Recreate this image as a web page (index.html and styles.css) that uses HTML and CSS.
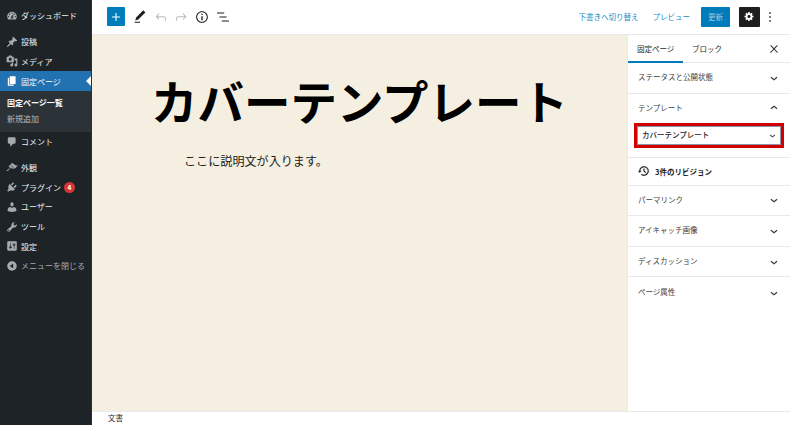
FILE: index.html
```html
<!DOCTYPE html>
<html lang="ja">
<head>
    <meta charset="UTF-8">
    <title>固定ページを編集</title>
    <link rel="stylesheet" href="styles.css">
</head>
<body>
    <svg class="defs" width="0" height="0">
        <symbol id="chev-down" viewBox="0 0 24 24"><path d="M17.5 11.6L12 16l-5.5-4.4.9-1.2L12 14l4.5-3.6 1 1.2z"/></symbol>
        <symbol id="chev-up" viewBox="0 0 24 24"><path d="M6.5 12.4L12 8l5.5 4.4-.9 1.2L12 10l-4.5 3.6-1-1.2z"/></symbol>
    </svg>

    <aside class="adminmenu">
        <ul class="menu menu-top">
            <li class="item"><svg viewBox="0 0 20 20"><path d="M3.76 16h12.48c1.1-1.37 1.76-3.11 1.76-5 0-4.42-3.58-8-8-8s-8 3.58-8 8c0 1.89.66 3.63 1.76 5zM10 4c.55 0 1 .45 1 1s-.45 1-1 1-1-.45-1-1 .45-1 1-1zM6 6c.55 0 1 .45 1 1s-.45 1-1 1-1-.45-1-1 .45-1 1-1zm8 0c.55 0 1 .45 1 1s-.45 1-1 1-1-.45-1-1 .45-1 1-1zm-5.37 5.55L12 7v6c0 1.1-.9 2-2 2s-2-.9-2-2c0-.57.24-1.08.63-1.45zM4 10c.55 0 1 .45 1 1s-.45 1-1 1-1-.45-1-1 .45-1 1-1zm12 0c.55 0 1 .45 1 1s-.45 1-1 1-1-.45-1-1 .45-1 1-1zm-5 3c0-.55-.45-1-1-1s-1 .45-1 1 .45 1 1 1 1-.45 1-1z"/></svg>ダッシュボード</li>
        </ul>
        <ul class="menu menu-group">
            <li class="item"><svg viewBox="0 0 20 20"><path d="M10.44 3.02l1.82-1.82 6.36 6.35-1.83 1.82c-1.05-.68-2.48-.57-3.41.36l-.75.75c-.92.93-1.04 2.35-.35 3.41l-1.83 1.82-2.41-2.41-2.8 2.79c-.42.42-3.38 2.71-3.8 2.29s1.86-3.39 2.28-3.81l2.79-2.79L4.1 9.36l1.83-1.82c1.05.69 2.48.57 3.4-.36l.75-.75c.93-.92 1.05-2.35.36-3.41z"/></svg>投稿</li>
            <li class="item"><svg viewBox="0 0 20 20"><path d="M13 11V4c0-.55-.45-1-1-1h-1.67L9 1H5L3.67 3H2c-.55 0-1 .45-1 1v7c0 .55.45 1 1 1h10c.55 0 1-.45 1-1zM7 4.5c1.38 0 2.5 1.12 2.5 2.5S8.38 9.5 7 9.5 4.5 8.38 4.5 7 5.62 4.5 7 4.5zM14 6h5v10.5c0 1.38-1.12 2.5-2.5 2.5S14 17.88 14 16.5s1.12-2.5 2.5-2.5c.17 0 .34.02.5.05V9h-3V6zm-4 8.05V13h2v3.5c0 1.38-1.12 2.5-2.5 2.5S7 17.88 7 16.5 8.12 14 9.5 14c.17 0 .34.02.5.05z"/></svg>メディア</li>
            <li class="item item-current"><svg viewBox="0 0 20 20"><path d="M6 15V2h10v13H6zm-1 1h8v2H3V5h2v11z"/></svg>固定ページ</li>
        </ul>
        <ul class="submenu">
            <li class="sub-current">固定ページ一覧</li>
            <li>新規追加</li>
        </ul>
        <ul class="menu menu-comment">
            <li class="item"><svg viewBox="0 0 20 20"><path d="M5 2h9c1.1 0 2 .9 2 2v7c0 1.1-.9 2-2 2h-2l-5 5v-5H5c-1.1 0-2-.9-2-2V4c0-1.1.9-2 2-2z"/></svg>コメント</li>
        </ul>
        <ul class="menu menu-group">
            <li class="item"><svg viewBox="0 0 20 20"><path d="M14.48 11.06L7.41 3.99l1.5-1.5c.5-.56 2.3-.47 3.51.32 1.21.8 1.43 1.28 2.91 2.1 1.18.64 2.45 1.26 4.45.85zm-.71.71L6.7 4.7 4.93 6.47c-.39.39-.39 1.02 0 1.41l1.06 1.06c.39.39.39 1.03 0 1.42-.6.6-1.43 1.11-2.21 1.69-.35.26-.7.53-1.01.84C1.43 13.23.4 14.84 1.19 15.12c.79.28 2.37-.75 3.71-2.09.31-.31.58-.66.84-1.01.58-.78 1.09-1.61 1.69-2.21.39-.39 1.03-.39 1.42 0l1.06 1.06c.39.39 1.02.39 1.41 0z"/></svg>外観</li>
            <li class="item"><svg viewBox="0 0 20 20"><path d="M13.11 4.36L9.87 7.6 8 5.73l3.24-3.24c.35-.34 1.05-.2 1.56.32.52.51.66 1.21.31 1.55zm-8 1.77l.91-1.12 9.01 9.01-1.19.84c-.71.71-2.63 1.16-3.82 1.16H6.14L4.9 17.26c-.59.59-1.54.59-2.12 0-.59-.58-.59-1.53 0-2.12l1.24-1.24v-3.88c0-1.13.4-3.19 1.09-3.89zm7.26 3.97l3.24-3.24c.34-.35 1.04-.21 1.55.31.52.51.66 1.21.31 1.55l-3.24 3.25z"/></svg>プラグイン<span class="badge">4</span></li>
            <li class="item"><svg viewBox="0 0 20 20"><path d="M10 9.25c-2.27 0-2.73-3.44-2.73-3.44C7 4.02 7.82 2 9.97 2c2.16 0 2.98 2.02 2.71 3.81 0 0-.41 3.44-2.68 3.44zm0 2.57L12.72 10c2.39 0 4.52 2.33 4.52 4.53v2.49s-3.65 1.13-7.24 1.13c-3.65 0-7.24-1.13-7.24-1.13v-2.49c0-2.25 1.94-4.48 4.47-4.48z"/></svg>ユーザー</li>
            <li class="item"><svg viewBox="0 0 20 20"><path d="M16.68 9.77c-1.34 1.34-3.3 1.67-4.95.99l-5.41 6.52c-.99.99-2.59.99-3.58 0s-.99-2.59 0-3.57l6.52-5.42c-.68-1.65-.35-3.61.99-4.95 1.28-1.28 3.12-1.62 4.72-1.06l-2.89 2.89 2.82 2.82 2.86-2.87c.53 1.58.18 3.39-1.08 4.65zM3.81 16.21c.4.39 1.04.39 1.43 0 .4-.4.4-1.04 0-1.43-.39-.4-1.03-.4-1.43 0-.39.39-.39 1.03 0 1.43z"/></svg>ツール</li>
            <li class="item"><svg viewBox="0 0 20 20"><path d="M18 16V4c0-1.1-.9-2-2-2H4c-1.1 0-2 .9-2 2v12c0 1.1.9 2 2 2h12c1.1 0 2-.9 2-2zM8 11h1c.55 0 1 .45 1 1s-.45 1-1 1H8v1.5c0 .28-.22.5-.5.5s-.5-.22-.5-.5V13H6c-.55 0-1-.45-1-1s.45-1 1-1h1V5.5c0-.28.22-.5.5-.5s.5.22.5.5V11zm5-2h-1c-.55 0-1-.45-1-1s.45-1 1-1h1V5.5c0-.28.22-.5.5-.5s.5.22.5.5V7h1c.55 0 1 .45 1 1s-.45 1-1 1h-1v5.5c0 .28-.22.5-.5.5s-.5-.22-.5-.5V9z"/></svg>設定</li>
            <li class="item item-collapse"><svg viewBox="0 0 20 20"><path d="M10 2.16c4.33 0 7.84 3.51 7.84 7.84s-3.51 7.84-7.84 7.84S2.16 14.33 2.16 10 5.71 2.16 10 2.16zm2 11.72V6.12L6.18 9.97z"/></svg>メニューを閉じる</li>
        </ul>
    </aside>

    <div class="editor">
        <header class="topbar">
            <div class="tools">
                <button class="btn-add"><svg viewBox="0 0 24 24"><path d="M18 11.2h-5.2V6h-1.6v5.2H6v1.6h5.2V18h1.6v-5.2H18z"/></svg></button>
                <svg class="tool" viewBox="0 0 24 24"><path d="M20.1 5.1L16.9 2 6.2 12.7l-1.3 4.4 4.5-1.3L20.1 5.1zM4 20.8h8v-1.5H4v1.5z"/></svg>
                <svg class="tool tool-off" viewBox="0 0 24 24"><path d="M18.3 11.7c-.6-.6-1.4-.9-2.3-.9H6.7l2.9-3.3-1.1-1-4.5 5L8.5 16l1-1-2.7-2.7H16c.5 0 .9.2 1.3.5 1 1 1 3.4 1 4.5v.3h1.5v-.2c0-1.5 0-4.3-1.5-5.7z"/></svg>
                <svg class="tool tool-off" viewBox="0 0 24 24"><path d="M15.6 6.5l-1.1 1 2.9 3.3H8c-.9 0-1.7.3-2.3.9-1.4 1.5-1.4 4.2-1.4 5.6v.2h1.5v-.3c0-1.1 0-3.5 1-4.5.3-.3.7-.5 1.3-.5h9.2L14.5 15l1.1 1.1 4.6-4.6-4.6-5z"/></svg>
                <svg class="tool" viewBox="0 0 24 24"><path d="M12 3.2c-4.8 0-8.8 3.9-8.8 8.8 0 4.8 3.9 8.8 8.8 8.8 4.8 0 8.8-3.9 8.8-8.8 0-4.8-4-8.8-8.8-8.8zm0 16c-4 0-7.2-3.3-7.2-7.2C4.8 8 8 4.8 12 4.8s7.2 3.3 7.2 7.2c0 4-3.2 7.2-7.2 7.2zM11 17h2v-6h-2v6zm0-8h2V7h-2v2z"/></svg>
                <svg class="tool" viewBox="0 0 24 24"><path d="M13.8 5.2H3v1.5h10.8V5.2zm-3.6 12v1.5H21v-1.5H10.2zm7.2-6H6.6v1.5h10.8v-1.5z"/></svg>
            </div>
            <div class="actions">
                <a class="link link-draft">下書きへ切り替え</a>
                <a class="link">プレビュー</a>
                <button class="btn-update">更新</button>
                <button class="btn-settings"><svg viewBox="0 0 20 20"><path d="M18 12h-2.18c-.17.7-.44 1.35-.81 1.93l1.54 1.54-2.1 2.1-1.54-1.54c-.58.36-1.23.63-1.91.79V19H8v-2.18c-.68-.16-1.33-.43-1.91-.79l-1.54 1.54-2.12-2.12 1.54-1.54c-.36-.58-.63-1.23-.79-1.91H1V9.03h2.17c.16-.7.44-1.35.8-1.94L2.43 5.55l2.1-2.1 1.54 1.54c.58-.37 1.24-.64 1.93-.81V2h3v2.18c.68.16 1.33.43 1.91.79l1.54-1.54 2.12 2.12-1.54 1.54c.36.59.64 1.24.8 1.94H18V12zm-8.5 1.5c1.66 0 3-1.34 3-3s-1.34-3-3-3-3 1.34-3 3 1.34 3 3 3z"/></svg></button>
                <svg class="kebab" viewBox="0 0 24 24"><path d="M13 19h-2v-2h2v2zm0-6h-2v-2h2v2zm0-6h-2V5h2v2z"/></svg>
            </div>
        </header>

        <div class="workspace">
            <main class="canvas">
                <h1 class="page-title">カバーテンプレート</h1>
                <p class="page-text">ここに説明文が入ります。</p>
            </main>

            <section class="panel">
                <div class="tabs">
                    <span class="tab tab-active">固定ページ</span>
                    <span class="tab">ブロック</span>
                    <svg class="close" viewBox="0 0 24 24"><path d="M13 11.8l6.1-6.3-1-1-6.1 6.2-6.1-6.2-1 1 6.1 6.3-6.5 6.7 1 1 6.5-6.6 6.5 6.6 1-1z"/></svg>
                </div>
                <div class="row">ステータスと公開状態<svg><use href="#chev-down"/></svg></div>
                <div class="template">
                    <div class="template-head">テンプレート<svg><use href="#chev-up"/></svg></div>
                    <div class="select-mark">
                        <div class="select">カバーテンプレート<svg><use href="#chev-down"/></svg></div>
                    </div>
                </div>
                <div class="revisions">
                    <svg viewBox="0 0 24 24"><path d="M5.5 12h1.75l-2.5 3-2.5-3H4a8 8 0 113.134 6.35l.907-1.194A6.5 6.5 0 105.5 12zm9.53 1.97l-2.28-2.28V8.5a.75.75 0 00-1.5 0V12a.747.747 0 00.218.529l2.5 2.5a.75.75 0 101.06-1.061z"/></svg>
                    3件のリビジョン
                </div>
                <div class="row">パーマリンク<svg><use href="#chev-down"/></svg></div>
                <div class="row">アイキャッチ画像<svg><use href="#chev-down"/></svg></div>
                <div class="row">ディスカッション<svg><use href="#chev-down"/></svg></div>
                <div class="row row-last">ページ属性<svg><use href="#chev-down"/></svg></div>
            </section>
        </div>

        <footer class="statusbar">文書</footer>
    </div>
</body>
</html>
```

FILE: styles.css
```css
* {
    box-sizing: border-box;
}
html, body {
    height: 100%;
}
body {
    margin: 0;
    display: flex;
    overflow: hidden;
    font-family: "Noto Sans CJK JP", "Noto Sans", sans-serif;
    font-size: 8px;
    color: #1e1e1e;
    background: #fff;
}
ul {
    list-style: none;
    margin: 0;
    padding: 0;
}
button {
    border: 0;
    padding: 0;
    font-family: inherit;
}
.defs {
    position: absolute;
}

/* admin menu */
.adminmenu {
    width: 92px;
    flex: none;
    background: #1e2327;
    color: #eef0f1;
    padding-top: 6px;
    border-right: 1px solid #2b3034;
}
.item {
    position: relative;
    display: flex;
    align-items: center;
    height: 19.6px;
    padding-left: 6px;
}
.item svg {
    width: 12px;
    height: 12px;
    margin-right: 3px;
    fill: #a7aaad;
    flex: none;
}
.menu-group {
    margin-top: 6.5px;
}
.item-current {
    background: #2271b1;
    color: #fff;
}
.item-current svg {
    fill: #fff;
}
.item-current::after {
    content: "";
    position: absolute;
    right: 0;
    top: 5px;
    border: 5px solid transparent;
    border-left: 0;
    border-right-color: #fff;
}
.submenu {
    background: #2c3338;
    height: 41px;
    padding: 4px 0 0 7px;
    color: #b4b9be;
    line-height: 16px;
}
.sub-current {
    color: #fff;
    font-weight: 700;
}
.badge {
    width: 11px;
    height: 11px;
    margin-left: 3px;
    border-radius: 50%;
    background: #d63638;
    color: #fff;
    font-size: 6.5px;
    font-weight: 700;
    line-height: 11px;
    text-align: center;
}
.item-collapse {
    color: #a7aaad;
}

/* top bar */
.editor {
    flex: 1;
    min-width: 0;
    display: flex;
    flex-direction: column;
}
.topbar {
    height: 35px;
    flex: none;
    display: flex;
    align-items: center;
    justify-content: space-between;
    border-bottom: 1px solid #e9e9e9;
    padding: 0 12px 1px 15px;
}
.tools {
    display: flex;
    align-items: center;
}
.btn-add {
    width: 18px;
    height: 19px;
    margin-right: 7px;
    background: #007cba;
    border-radius: 1px;
    display: flex;
    align-items: center;
    justify-content: center;
}
.btn-add svg {
    width: 16px;
    height: 16px;
    fill: #fff;
}
.tool {
    width: 16px;
    height: 16px;
    margin-right: 4.7px;
    fill: #1e1e1e;
}
.tool-off {
    fill: #b9bcbf;
}
.actions {
    display: flex;
    align-items: center;
}
.link {
    color: #1a8ac6;
    font-size: 7.5px;
    margin-right: 11px;
}
.link-draft {
    margin-right: 14px;
}
.btn-update {
    width: 29px;
    height: 20px;
    margin-right: 9px;
    background: #007cba;
    border-radius: 1px;
    color: #9fcbe3;
    font-size: 7.5px;
}
.btn-settings {
    width: 21px;
    height: 20px;
    margin-right: 2px;
    background: #1e1e1e;
    border-radius: 1px;
    display: flex;
    align-items: center;
    justify-content: center;
}
.btn-settings svg {
    width: 10.5px;
    height: 10.5px;
    fill: #fff;
}
.kebab {
    width: 16px;
    height: 16px;
}

/* canvas */
.workspace {
    flex: 1;
    min-height: 0;
    display: flex;
}
.canvas {
    flex: 1;
    min-width: 0;
    background: #f5efe1;
    border-right: 1px solid #e9e9e9;
}
.page-title {
    margin: 30px 0 0;
    text-align: center;
    font-size: 46.5px;
    font-weight: 700;
    line-height: 70px;
    color: #000;
}
.page-text {
    margin: 17px 0 0 92px;
    font-size: 12.1px;
    line-height: 18px;
    color: #1a1a1a;
}

/* settings panel */
.panel {
    width: 162px;
    flex: none;
    background: #fff;
    font-size: 7.5px;
}
.panel svg {
    fill: #1e1e1e;
    stroke: #1e1e1e;
    stroke-width: .5;
}
.tabs {
    height: 28px;
    display: flex;
    align-items: center;
    border-bottom: 1px solid #e9e9e9;
}
.tab {
    height: 100%;
    display: flex;
    align-items: center;
    padding: 0 9px;
    white-space: nowrap;
    color: #1e1e1e;
}
.tab-active {
    width: 55px;
    border-bottom: 2px solid #007cba;
    margin-bottom: -1px;
}
.close {
    width: 12px;
    height: 12px;
    margin-left: auto;
    margin-right: 10px;
}
.row, .template-head {
    height: 30.6px;
    display: flex;
    align-items: center;
    justify-content: space-between;
    padding: 0 9px 2px 10px;
    border-bottom: 1px solid #e9e9e9;
    color: #3c4043;
}
.row svg, .template-head svg {
    width: 14px;
    height: 14px;
    margin-top: 2px;
}
.row-last {
    border-bottom: 0;
}
.template {
    height: 64px;
    border-bottom: 1px solid #e9e9e9;
}
.template-head {
    border-bottom: 0;
    height: 29px;
}
.select-mark {
    margin: 0 6px;
    height: 25px;
    border: 3px solid #d00000;
}
.select {
    height: 100%;
    display: flex;
    align-items: center;
    justify-content: space-between;
    padding: 0 2px 2px 4px;
    border: 1px solid #8d96a0;
    font-weight: 500;
    color: #1e1e1e;
}
.select svg {
    width: 11px;
    height: 11px;
    margin-top: 2px;
}
.revisions {
    height: 28px;
    display: flex;
    align-items: center;
    padding: 0 0 0 9px;
    border-bottom: 1px solid #e9e9e9;
    font-weight: 700;
}
.revisions svg {
    width: 14px;
    height: 14px;
    margin-right: 4px;
}

/* bottom bar */
.statusbar {
    height: 14px;
    flex: none;
    border-top: 1px solid #e9e9e9;
    padding-left: 16px;
    line-height: 12px;
    font-size: 7.5px;
}
```
